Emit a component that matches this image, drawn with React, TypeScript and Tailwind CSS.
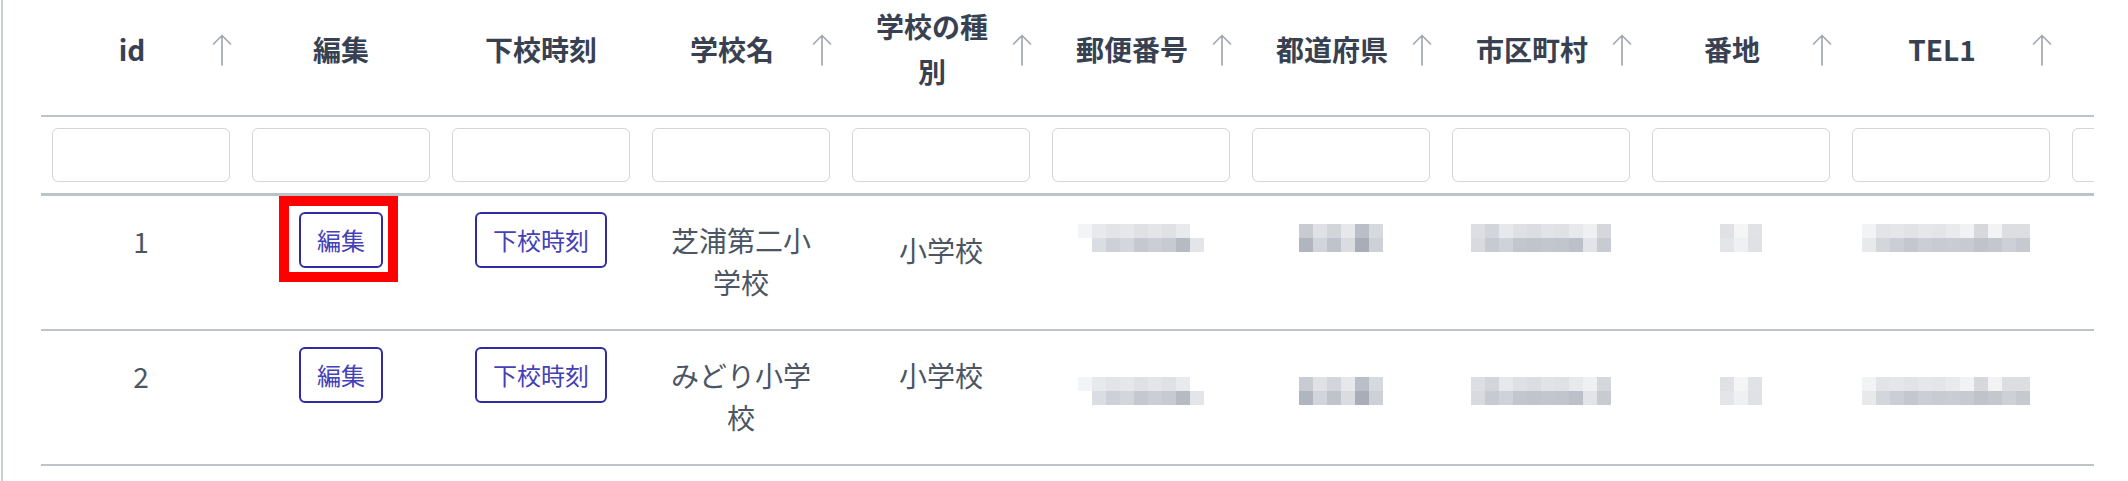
import React from "react";

type Col = { label: string; arrow: boolean; wide?: boolean };

const cols: Col[] = [
  { label: "id", arrow: true },
  { label: "編集", arrow: false },
  { label: "下校時刻", arrow: false },
  { label: "学校名", arrow: true },
  { label: "学校の種別", arrow: true },
  { label: "郵便番号", arrow: true },
  { label: "都道府県", arrow: true },
  { label: "市区町村", arrow: true },
  { label: "番地", arrow: true },
  { label: "TEL1", arrow: true, wide: true },
  { label: "", arrow: false },
];

type M = (string | null)[][];

const mosaics: Record<string, M> = {
  zip: [
    ["#f3f4f6", "#e7e9ec", "#e2e4e8", "#e5e7ea", "#dfe1e5", "#e3e5e8", "#dfe1e5", "#e9eaed", null],
    [null, "#dadde1", "#cdd0d6", "#d3d6db", "#c5c8cf", "#cbced4", "#c7cad1", "#b6bac3", "#e3e5e8"],
  ],
  pref: [
    ["#c8cbd2", "#dfe1e5", "#d2d5da", "#e7e8eb", "#babec6", "#d6d9de"],
    ["#b1b5bf", "#d1d4da", "#bfc3cb", "#dadce1", "#a9adb8", "#cdd0d6"],
  ],
  city: [
    ["#dcdee3", "#d2d5da", "#e6e8eb", "#dee0e4", "#dbdde2", "#e1e3e7", "#dfe1e5", "#e8e9ec", "#eef0f2", "#d5d7dc"],
    ["#d8dade", "#c6cad1", "#cfd2d8", "#c2c6cd", "#c0c4cb", "#c3c6cd", "#c1c5cc", "#bcc0c8", "#e2e4e7", "#c8cbd2"],
  ],
  addr: [
    ["#dfe1e4", "#f5f5f6", "#e0e2e5"],
    ["#e4e5e8", "#eff0f1", "#dfe1e4"],
  ],
  tel: [
    ["#f2f3f4", "#e2e4e7", "#e4e6e9", "#e1e3e6", "#e6e7ea", "#e3e5e8", "#e9eaec", "#f1f2f3", "#d6d8dc", "#f3f3f4", "#dcdee2", "#dcdee2"],
    ["#e8e9eb", "#d3d6da", "#cbced4", "#c4c8ce", "#cbced4", "#c8cbd1", "#c9ccd2", "#c7cad0", "#c0c3ca", "#c4c7cd", "#cdd0d5", "#c6c9cf"],
  ],
};

function Mosaic({ data }: { data: M }) {
  const n = Math.max(...data.map((r) => r.length));
  return (
    <svg width={n * 14} height={data.length * 14} viewBox={`0 0 ${n * 14} ${data.length * 14}`}>
      {data.map((row, ri) =>
        row.map((c, ci) =>
          c ? <rect key={`${ri}-${ci}`} x={ci * 14} y={ri * 14} width={14} height={14} fill={c} /> : null
        )
      )}
    </svg>
  );
}

function Arrow() {
  return (
    <svg width="20" height="33" viewBox="0 0 20 33" fill="none">
      <path d="M10 32V2.5M1.5 11L10 2.5L18.5 11" stroke="#a3a9b1" strokeWidth="1.7" strokeLinecap="round" strokeLinejoin="round" />
    </svg>
  );
}

function Btn({ label, highlight }: { label: string; highlight?: boolean }) {
  return (
    <div className="relative h-[56px]">
      <button className="flex h-[56px] items-center rounded-[6px] border-2 border-[#2f2ca3] bg-white px-[16px] text-[24px] leading-none text-[#4340b8]">
        {label}
      </button>
      {highlight && (
        <div className="pointer-events-none absolute -bottom-[14px] -left-[20px] -right-[15px] -top-[16px] border-[10px] border-[#ff0000]" />
      )}
    </div>
  );
}

type Row = { id: number; name: string; type: string; typePt: string; mosaicPt: string; highlight: boolean };

const rows: Row[] = [
  { id: 1, name: "芝浦第二小学校", type: "小学校", typePt: "pt-[33px]", mosaicPt: "pt-[28px]", highlight: true },
  { id: 2, name: "みどり小学校", type: "小学校", typePt: "pt-[23px]", mosaicPt: "pt-[46px]", highlight: false },
];

export default function App() {
  return (
    <div className="flex h-[481px] w-[2128px] bg-white font-['Noto_Sans_CJK_JP',sans-serif]">
      <div className="ml-[1px] w-[2px] shrink-0 bg-[#c8d1d4]" />
      <div className="ml-[38px] w-[2053px] shrink-0 overflow-hidden">
        <div className="w-[2261px]">
          {/* header */}
          <div className="flex h-[117px] border-b-2 border-[#bcc4c9]">
            {cols.map((c, i) => (
              <div
                key={i}
                className={`flex h-full shrink-0 items-center pb-[17px] ${c.wide ? "w-[220px]" : "w-[200px]"} ${
                  c.arrow ? "pl-[30px] pr-[9px]" : "justify-center"
                }`}
              >
                <div
                  className={`text-center text-[28px] font-bold leading-[45px] text-[#374151] ${c.arrow ? "flex-1" : ""}`}
                >
                  {c.label}
                </div>
                {c.arrow && (
                  <div className="ml-[19px] flex w-[20px] shrink-0 justify-center">
                    <Arrow />
                  </div>
                )}
              </div>
            ))}
          </div>
          {/* filter row */}
          <div className="flex h-[79px] border-b-[3px] border-[#b9c3c8]">
            {cols.map((c, i) => (
              <div key={i} className={`shrink-0 px-[11px] pt-[11px] ${c.wide ? "w-[220px]" : "w-[200px]"}`}>
                <input className="block h-[54px] w-full rounded-[6px] border-[1.5px] border-[#d6d6d6] bg-white outline-none" />
              </div>
            ))}
          </div>
          {/* data rows */}
          {rows.map((r) => (
            <div key={r.id} className="flex h-[135px] items-start border-b-2 border-[#bcc4c7] text-[28px] leading-[42px] text-[#4b5563]">
              <div className="w-[200px] shrink-0 pt-[24px] text-center">{r.id}</div>
              <div className="flex w-[200px] shrink-0 items-start justify-center pt-[16px]">
                <Btn label="編集" highlight={r.highlight} />
              </div>
              <div className="flex w-[200px] shrink-0 items-start justify-center pt-[16px]">
                <Btn label="下校時刻" />
              </div>
              <div className="w-[200px] shrink-0 px-[24px] pt-[23px] text-center">{r.name}</div>
              <div className={`w-[200px] shrink-0 px-[24px] text-center ${r.typePt}`}>{r.type}</div>
              <div className={`flex w-[200px] shrink-0 justify-center ${r.mosaicPt}`}>
                <Mosaic data={mosaics.zip} />
              </div>
              <div className={`flex w-[200px] shrink-0 justify-center ${r.mosaicPt}`}>
                <Mosaic data={mosaics.pref} />
              </div>
              <div className={`flex w-[200px] shrink-0 justify-center ${r.mosaicPt}`}>
                <Mosaic data={mosaics.city} />
              </div>
              <div className={`flex w-[200px] shrink-0 justify-center ${r.mosaicPt}`}>
                <Mosaic data={mosaics.addr} />
              </div>
              <div className={`flex w-[220px] shrink-0 justify-center pr-[10px] ${r.mosaicPt}`}>
                <Mosaic data={mosaics.tel} />
              </div>
              <div className="w-[200px] shrink-0" />
            </div>
          ))}
        </div>
      </div>
    </div>
  );
}
